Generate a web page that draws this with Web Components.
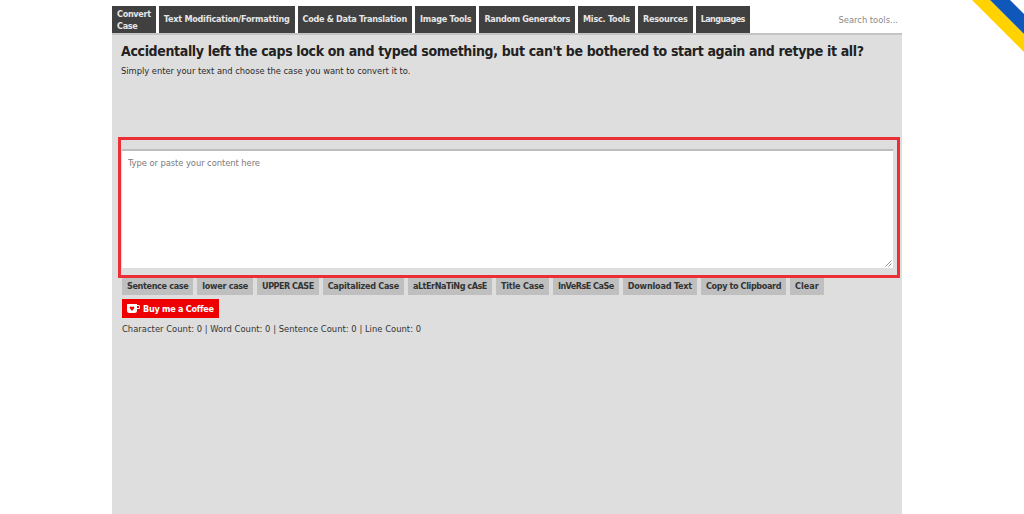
<!DOCTYPE html>
<html lang="en"><head><meta charset="utf-8"><title>Convert Case</title>
<style>
html,body{margin:0;padding:0;background:#fff;height:514px;overflow:hidden}
body{font-family:"DejaVu Sans",sans-serif;color:#222}
</style></head><body>
<cc-app></cc-app>
<script>
function def(name,css,html){
  customElements.define(name,class extends HTMLElement{
    constructor(){super();const r=this.attachShadow({mode:'open'});r.innerHTML='<style>'+css+'</style>'+html;}
  });
}
const FONT='"DejaVu Sans",sans-serif';
def('cc-tab',`:host{display:flex;align-items:center;box-sizing:border-box;height:27px;padding:var(--pt,1px) 5px 0;background:#404040;color:#e6e6e6;font:bold condensed 9px/11.5px ${FONT};letter-spacing:var(--ls,-.23px);white-space:nowrap}`,`<slot></slot>`);
def('cc-btn',`:host{display:flex;align-items:center;box-sizing:border-box;height:17px;padding:0 5px;background:#bfbfbf;color:#333;font:bold condensed 9px/11px ${FONT};letter-spacing:var(--ls,-.2px);white-space:nowrap}`,`<slot></slot>`);
def('cc-nav',`:host{display:flex;gap:3px;align-items:stretch;height:27px;padding-top:6px;border-bottom:2px solid #c4c4c4}
.s{margin-left:auto;align-self:center;padding-right:4px;font:condensed 9.3px ${FONT};color:#8a8a8a;white-space:nowrap}`,`<slot></slot><span class="s">Search tools...</span>`);
def('cc-editor',`:host{display:block;box-sizing:border-box;height:141px;margin:60px 2px 0 6px;border:3px solid #ec2f36;padding:9px 4px 7px 1px}
.ta{box-sizing:border-box;height:119px;background:#fff;border-top:2px solid #bdbdbd;padding:6px 6px 4px;font:condensed 9.3px/12px ${FONT};letter-spacing:-.06px;color:#7a7a7a;position:relative}
svg{position:absolute;right:1px;bottom:1px}`,`<div class="ta">Type or paste your content here<svg width="7" height="7" viewBox="0 0 7 7"><path d="M6.5 .5L.5 6.5M6.5 3.5L3.5 6.5" stroke="#999" fill="none"/></svg></div>`);
def('cc-coffee',`:host{display:inline-flex;align-items:center;gap:3px;box-sizing:border-box;height:19px;width:97px;padding-left:5px;background:#ee0000;color:#fff;font:bold condensed 9px ${FONT};letter-spacing:-.25px;white-space:nowrap}
svg{flex:none}`,`<svg width="13" height="9" viewBox="0 0 13 9"><path d="M0 0h10v1h1.500a1.500 1.500 0 0 1 1.500 1.500v1A1.500 1.500 0 0 1 11.500 5H10v1.500A2.500 2.500 0 0 1 7.500 9h-5A2.500 2.500 0 0 1 0 6.500zM10 2v2h1.500a.5.5 0 0 0 .5-.5v-1a.5.5 0 0 0-.5-.5z" fill="#fff"/><path d="M5 7L2.800 4.200a1.200 1.200 0 0 1 2.200-1 1.200 1.200 0 0 1 2.200 1z" fill="#ee0000"/></svg><slot></slot>`);
def('cc-ribbon',`:host{display:block;position:absolute;top:0;right:0;width:54px;height:54px}svg{display:block}`,`<svg width="54" height="54" viewBox="0 0 54 54"><polygon points="2,0 20,0 54,34 54,52" fill="#ffd200"/><polygon points="20,0 40,0 54,14 54,34" fill="#0f57b8"/></svg>`);
def('cc-app',`:host{display:block;box-sizing:border-box;width:790px;height:514px;margin-left:112px;background:#dedede}
.top{background:#fff}
h1{margin:0;padding:6px 0 0 9px;font:bold condensed 14px/20px ${FONT};letter-spacing:-.35px;color:#222;white-space:nowrap}
p{margin:0;padding:4px 0 0 9px;font:condensed 9.3px/12px ${FONT};letter-spacing:-.03px;color:#2a2a2a;white-space:nowrap}
.btns{display:flex;gap:4px;padding:0 0 0 10px}
.buy{padding:3px 0 0 10px;height:19px}
.count{padding:6px 0 0 10px;font:condensed 9.3px/12px ${FONT};letter-spacing:.03px;color:#333;white-space:nowrap}`,
`<div class="top"><cc-nav><cc-tab style="--ls:-.3px;--pt:2px">Convert<br>Case</cc-tab><cc-tab>Text Modification/Formatting</cc-tab><cc-tab style="--ls:-.27px">Code &amp; Data Translation</cc-tab><cc-tab>Image Tools</cc-tab><cc-tab style="--ls:-.33px">Random Generators</cc-tab><cc-tab>Misc. Tools</cc-tab><cc-tab style="--ls:-.25px">Resources</cc-tab><cc-tab style="--ls:-.6px">Languages</cc-tab></cc-nav></div>
<h1>Accidentally left the caps lock on and typed something, but can't be bothered to start again and retype it all?</h1>
<p>Simply enter your text and choose the case you want to convert it to.</p>
<cc-editor></cc-editor>
<div class="btns"><cc-btn style="--ls:-.35px">Sentence case</cc-btn><cc-btn style="--ls:-.3px">lower case</cc-btn><cc-btn style="--ls:-.5px">UPPER CASE</cc-btn><cc-btn style="--ls:-.26px">Capitalized Case</cc-btn><cc-btn style="--ls:-.46px">aLtErNaTiNg cAsE</cc-btn><cc-btn>Title Case</cc-btn><cc-btn style="--ls:-.53px">InVeRsE CaSe</cc-btn><cc-btn style="--ls:-.2px">Download Text</cc-btn><cc-btn style="--ls:-.38px">Copy to Clipboard</cc-btn><cc-btn style="--ls:0px">Clear</cc-btn></div>
<div class="buy"><cc-coffee>Buy me a Coffee</cc-coffee></div>
<div class="count">Character Count: 0 | Word Count: 0 | Sentence Count: 0 | Line Count: 0</div>
<cc-ribbon></cc-ribbon>`);
</script>
</body></html>
